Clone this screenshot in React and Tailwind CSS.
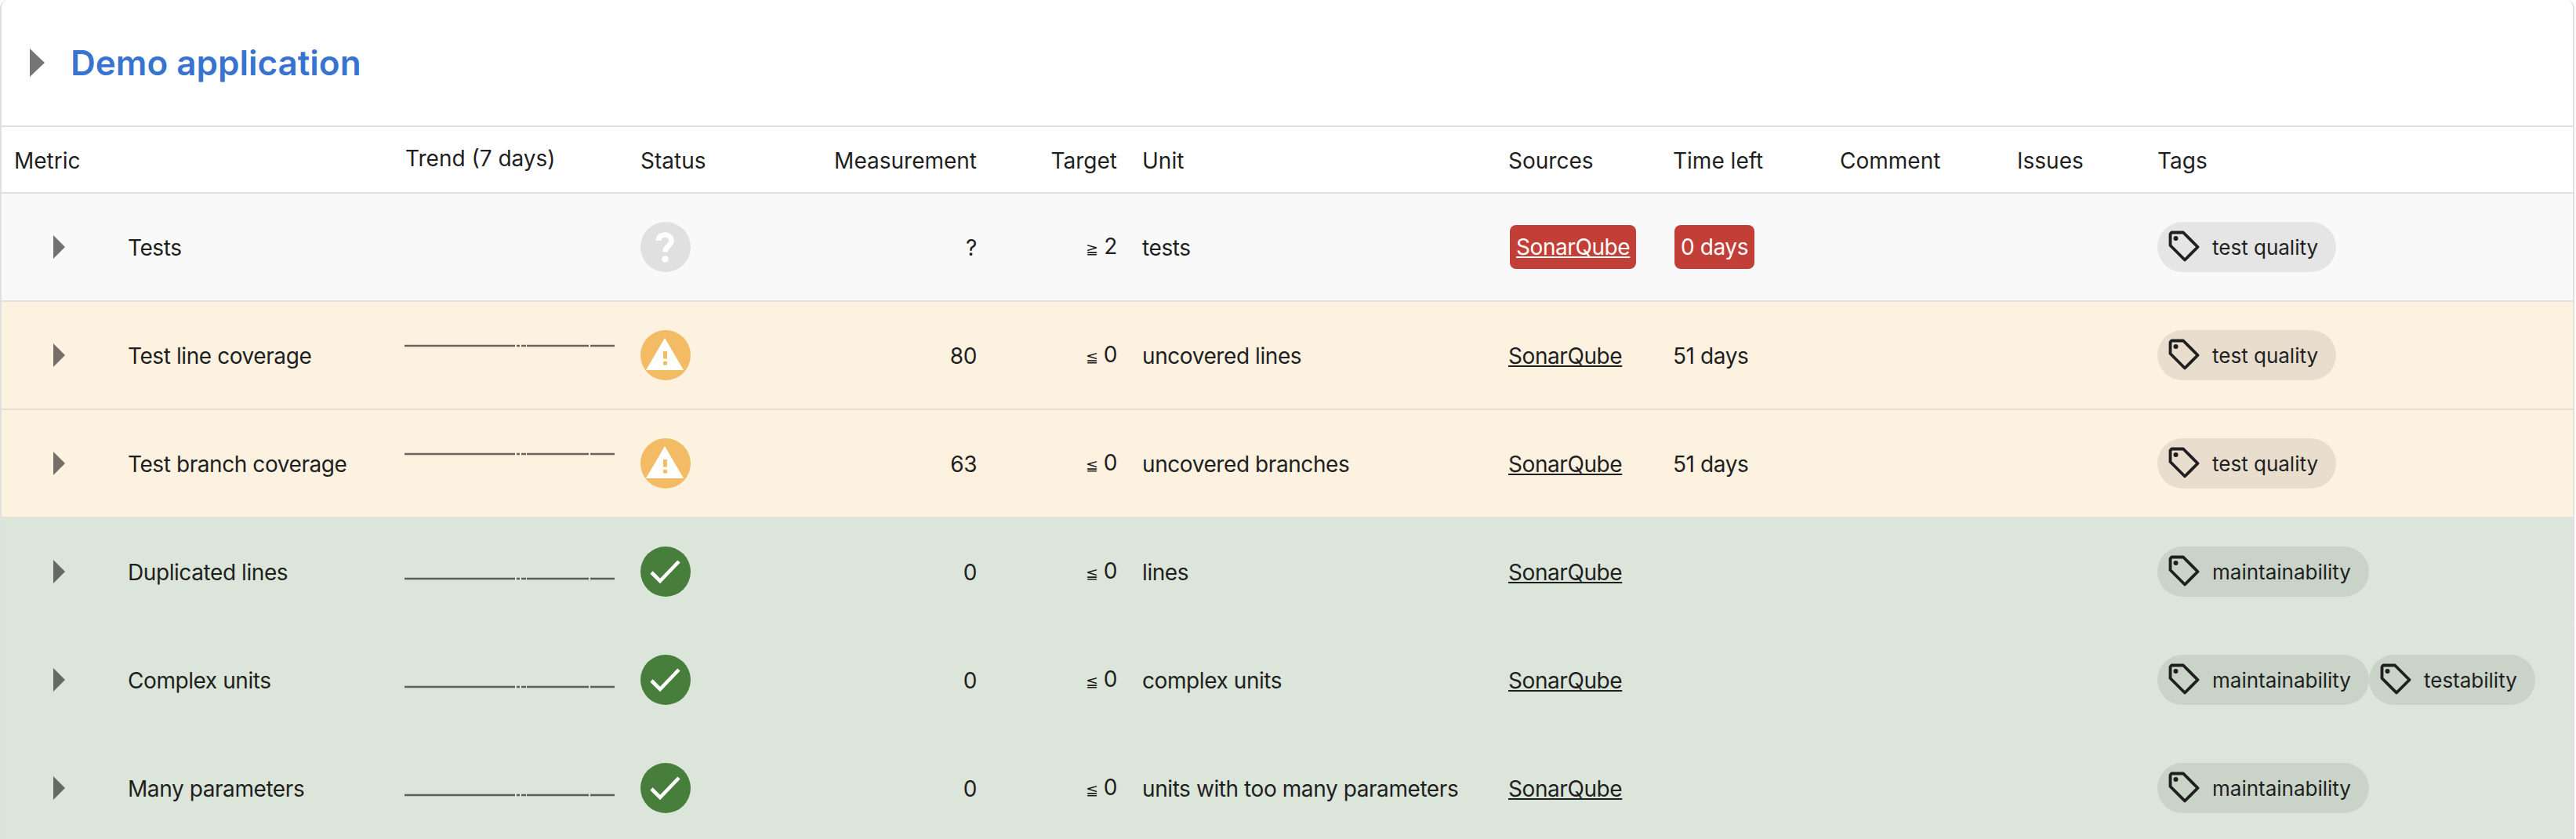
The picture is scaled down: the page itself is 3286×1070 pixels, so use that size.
const rows = [
  { name: "Tests", state: "unknown", value: "?", sym: "≧", target: "2", unit: "tests", late: true, left: "0 days", tags: ["test quality"] },
  { name: "Test line coverage", state: "warn", value: "80", sym: "≦", target: "0", unit: "uncovered lines", left: "51 days", tags: ["test quality"] },
  { name: "Test branch coverage", state: "warn", value: "63", sym: "≦", target: "0", unit: "uncovered branches", left: "51 days", tags: ["test quality"] },
  { name: "Duplicated lines", state: "ok", value: "0", sym: "≦", target: "0", unit: "lines", tags: ["maintainability"] },
  { name: "Complex units", state: "ok", value: "0", sym: "≦", target: "0", unit: "complex units", tags: ["maintainability", "testability"] },
  { name: "Many parameters", state: "ok", value: "0", sym: "≦", target: "0", unit: "units with too many parameters", tags: ["maintainability"] },
];

const rowClass = {
  unknown: "bg-[#f9f9f9]",
  warn: "bg-[#fdf1e0]",
  ok: "bg-[#dbe5d9]",
};

const cellBorder = {
  unknown: "border-[#e1e1e1]",
  warn: "border-[#e3e0dc]",
  ok: "border-[#dfe3dc]",
};

function Caret({ big }) {
  return (
    <svg viewBox="0 0 15 30" className={big ? "block w-[19px] h-[36px]" : "block w-[15px] h-[30px]"} preserveAspectRatio="none">
      <path d="M0 0 L15 15 L0 30 Z" fill="#000" fillOpacity="0.54" />
    </svg>
  );
}

function StatusIcon({ state }) {
  if (state === "unknown") {
    return (
      <svg viewBox="0 0 64 64" className="block w-16 h-16">
        <circle cx="32" cy="32" r="32" fill="#e0e0e0" />
        <path d="M23 24 C23 18 27 16.5 31.5 16.5 C36 16.5 39.5 20 39.5 24 C39.5 30.5 31.5 30.5 31.5 38.5" fill="none" stroke="#fff" strokeWidth="6.5" />
        <circle cx="31.5" cy="47.5" r="4.2" fill="#fff" />
      </svg>
    );
  }
  if (state === "warn") {
    return (
      <svg viewBox="0 0 64 64" className="block w-16 h-16">
        <circle cx="32" cy="32" r="32" fill="#f4bb65" />
        <path d="M31 10 L55 51 L7 51 Z" fill="#fff" />
        <rect x="29" y="27" width="5" height="9.5" fill="#f4bb65" />
        <rect x="29" y="40" width="5" height="4.5" fill="#f4bb65" />
      </svg>
    );
  }
  return (
    <svg viewBox="0 0 64 64" className="block w-16 h-16">
      <circle cx="32" cy="32" r="32" fill="#477e3c" />
      <path d="M14 33 L25 44 L49 19" fill="none" stroke="#fff" strokeWidth="4.6" />
    </svg>
  );
}

function Trend({ state }) {
  if (state === "unknown") return null;
  const y = state === "warn" ? 43 : 64;
  return (
    <svg viewBox="0 0 268 110" className="block w-[268px] h-[110px]">
      <path
        d={`M0 ${y} H141 M143 ${y} H147 M149 ${y} H155 M156 ${y} H235 M237 ${y} H268`}
        fill="none"
        stroke="#000"
        strokeOpacity="0.58"
        strokeWidth="2.6"
      />
    </svg>
  );
}

function TagIcon() {
  return (
    <svg viewBox="0 0 40 40" className="block w-10 h-10 shrink-0 -mt-[2px]">
      <path
        d="M5 2.5 H19 L37.5 21 L21 37.5 L2.5 19 V5 A2.5 2.5 0 0 1 5 2.5 Z"
        fill="none"
        stroke="#1f1f1f"
        strokeWidth="3.8"
        strokeLinejoin="round"
      />
      <circle cx="9.5" cy="10" r="3" fill="#1f1f1f" />
    </svg>
  );
}

function Chip({ label }) {
  return (
    <span className="inline-flex items-center h-16 shrink-0 rounded-full bg-black/8 pl-[14px] pr-[23px] gap-4 text-[26px] leading-none tracking-normal">
      <TagIcon />
      <span className="pt-[2px]">{label}</span>
    </span>
  );
}

export default function App() {
  const th = "h-[85px] px-4 font-normal tracking-normal text-left align-middle border-b-2 border-[#e1e1e1]";
  return (
    <div className="w-[3284px] h-[1070px] overflow-hidden rounded-t-[10px] border-x-2 border-[#e0e0e0] bg-white text-[28px] tracking-[-0.42px] leading-[40px] text-[#1f1f1f] font-['Inter','Noto_Sans',sans-serif]">
      <header className="flex items-center h-[162px] pl-9 gap-[33px] border-b-2 border-[#e0e0e0]">
        <Caret big />
        <h1 className="text-[44px] leading-none font-semibold tracking-normal text-[#3874cf]">Demo application</h1>
      </header>
      <table className="w-[3280px] table-fixed border-separate border-spacing-0">
        <colgroup>
          <col className="w-[144px]" />
          <col className="w-[355px]" />
          <col className="w-[300px]" />
          <col className="w-[112px]" />
          <col className="w-[349px]" />
          <col className="w-[179px]" />
          <col className="w-[467px]" />
          <col className="w-[210px]" />
          <col className="w-[213px]" />
          <col className="w-[226px]" />
          <col className="w-[179px]" />
          <col className="w-[546px]" />
        </colgroup>
        <thead>
          <tr>
            <th colSpan={2} className={th + " pt-[3px]"}>Metric</th>
            <th className={th + " pb-[3px]"}>Trend (7 days)</th>
            <th className={th + " pt-[3px]"}>Status</th>
            <th className={th + " pt-[3px] text-right"}>Measurement</th>
            <th className={th + " pt-[3px] text-right"}>Target</th>
            <th className={th + " pt-[3px]"}>Unit</th>
            <th className={th + " pt-[3px]"}>Sources</th>
            <th className={th + " pt-[3px]"}>Time left</th>
            <th className={th + " pt-[3px]"}>Comment</th>
            <th className={th + " pt-[3px]"}>Issues</th>
            <th className={th + " pt-[3px]"}>Tags</th>
          </tr>
        </thead>
        <tbody>
          {rows.map((r) => {
            const td = "h-[138px] align-middle border-b-2 px-4 " + cellBorder[r.state];
            return (
              <tr key={r.name} className={rowClass[r.state]}>
                <td className={td + " pl-[66px]"}><Caret /></td>
                <td className={td + " pl-[17px] pt-[2px]"}>{r.name}</td>
                <td className={td + " pl-[15px]"}><Trend state={r.state} /></td>
                <td className={td}><StatusIcon state={r.state} /></td>
                <td className={td + " pt-[2px] text-right"}>{r.value}</td>
                <td className={td + " pt-[2px] text-right"}>
                  <span className="text-[19px]">{r.sym}</span> {r.target}
                </td>
                <td className={td + " pt-[2px]"}>{r.unit}</td>
                <td className={td + (r.late ? "" : " pt-[2px]")}>
                  {r.late ? (
                    <span className="inline-block align-middle ml-[2px] h-14 px-2 rounded-lg bg-[#c23f38] text-white leading-[57px] underline">SonarQube</span>
                  ) : (
                    <span className="underline">SonarQube</span>
                  )}
                </td>
                <td className={td + (r.late ? "" : " pt-[2px]")}>
                  {r.late ? (
                    <span className="inline-block align-middle ml-[2px] h-14 px-2 rounded-lg bg-[#c23f38] text-white leading-[57px]">{r.left}</span>
                  ) : (
                    r.left
                  )}
                </td>
                <td className={td}></td>
                <td className={td}></td>
                <td className={td}>
                  <div className="flex">
                    {r.tags.map((t) => <Chip key={t} label={t} />)}
                  </div>
                </td>
              </tr>
            );
          })}
        </tbody>
      </table>
    </div>
  );
}
